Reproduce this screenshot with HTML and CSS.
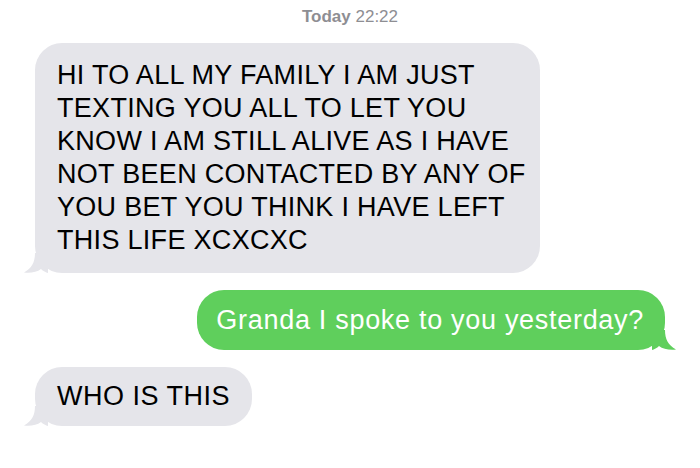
FILE: index.html
```html
<!DOCTYPE html>
<html lang="en">
<head>
    <meta charset="UTF-8">
    <meta name="viewport" content="width=device-width, initial-scale=1.0">
    <title>Messages</title>
    <link rel="stylesheet" href="styles.css">
</head>
<body>

    <div class="thread">
        <div class="stamp"><strong>Today</strong> 22:22</div>

        <div class="msg in wide">
            HI TO ALL MY FAMILY I AM JUST<br>
            TEXTING YOU ALL TO LET YOU<br>
            KNOW I AM STILL ALIVE AS I HAVE<br>
            NOT BEEN CONTACTED BY ANY OF<br>
            YOU BET YOU THINK I HAVE LEFT<br>
            THIS LIFE XCXCXC
            <svg class="tail" viewBox="0 0 24 20" width="24" height="20"><path d="M24 0H11C11 9 8 15 0 19.6C7 20.4 13 19 17 16C19 18 22 19.5 24 20Z"/></svg>
        </div>

        <div class="msg out">
            Granda I spoke to you yesterday?
            <svg class="tail" viewBox="0 0 24 20" width="24" height="20"><path d="M0 0H13C13 9 16 15 24 19.6C17 20.4 11 19 7 16C5 18 2 19.5 0 20Z"/></svg>
        </div>

        <div class="msg in">
            WHO IS THIS
            <svg class="tail" viewBox="0 0 24 20" width="24" height="20"><path d="M24 0H11C11 9 8 15 0 19.6C7 20.4 13 19 17 16C19 18 22 19.5 24 20Z"/></svg>
        </div>
    </div>

</body>
</html>
```

FILE: styles.css
```css
body {
    font-family: "Liberation Sans", Arial, sans-serif;
    background-color: #fff;
    margin: 0;
    padding: 0;
}
.thread {
    display: flex;
    flex-direction: column;
    padding: 6px 35px 0 35px;
}
.stamp {
    align-self: center;
    font-size: 17px;
    line-height: 21px;
    color: #8e8e93;
    margin-bottom: 16px;
}
.stamp strong {
    font-weight: 600;
}
.msg {
    position: relative;
    border-radius: 27px;
    font-size: 27px;
    line-height: 33px;
    letter-spacing: 0.5px;
    padding: 13px 22px;
    margin-bottom: 17px;
}
.msg.in {
    align-self: flex-start;
    background-color: #e5e5ea;
    color: #000;
}
.msg.wide {
    width: 461px;
    white-space: nowrap;
    letter-spacing: 0.3px;
    padding: 16px 22px;
}
.msg.out {
    align-self: flex-end;
    background-color: #5fcf5c;
    color: #fff;
    letter-spacing: 0.7px;
    padding: 14px 21px 13px 19px;
}
.tail {
    position: absolute;
    bottom: 0;
}
.msg.in .tail {
    left: -11px;
    fill: #e5e5ea;
}
.msg.out .tail {
    right: -11px;
    fill: #5fcf5c;
}
```
